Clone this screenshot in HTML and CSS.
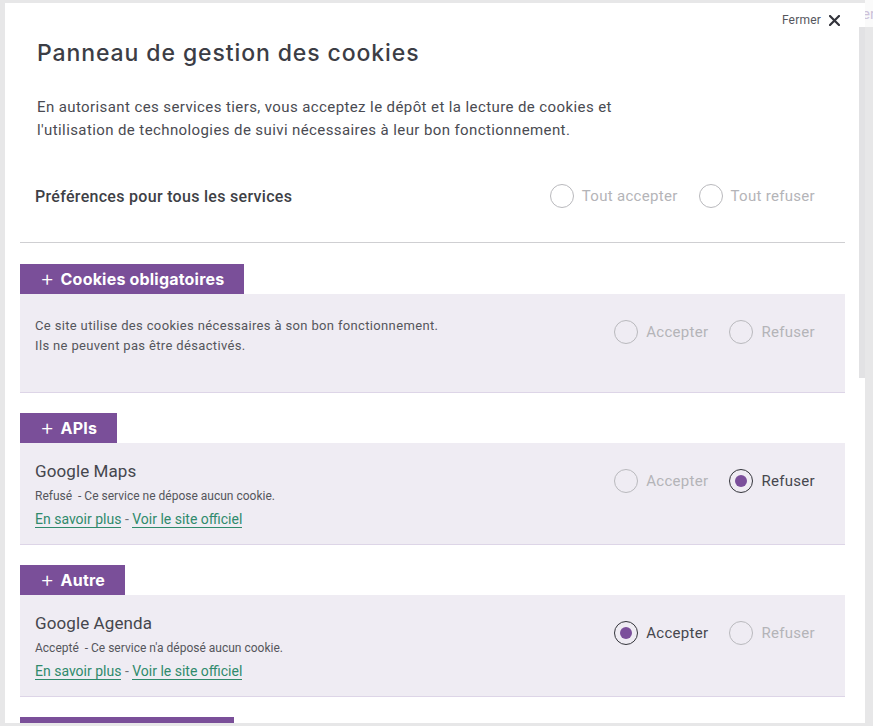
FILE: index.html
```html
<!DOCTYPE html>
<html lang="fr">
<head>
    <meta charset="utf-8">
    <title>Gestion des cookies</title>
    <link rel="stylesheet" href="styles.css">
</head>
<body>
    <div class="page-behind">
        <span class="behind-link">er</span>
    </div>

    <div class="modal">
        <div class="scroll-thumb"></div>
        <button class="close-btn">Fermer
            <svg width="11" height="11" viewBox="0 0 11 11"><path d="M1 1 L10 10 M10 1 L1 10" stroke="#33343c" stroke-width="2.2" stroke-linecap="round"/></svg>
        </button>

        <h1 class="modal-title">Panneau de gestion des cookies</h1>
        <p class="intro">En autorisant ces services tiers, vous acceptez le dépôt et la lecture de cookies et<br>l'utilisation de technologies de suivi nécessaires à leur bon fonctionnement.</p>

        <div class="all-row">
            <span class="all-label">Préférences pour tous les services</span>
            <div class="choices">
                <label class="choice"><span class="radio"></span>Tout accepter</label>
                <label class="choice"><span class="radio"></span>Tout refuser</label>
            </div>
        </div>

        <section class="group">
            <div class="group-tab"><span class="plus">+</span>Cookies obligatoires</div>
            <div class="service service-mandatory">
                <div class="service-info">
                    <p class="mandatory-text">Ce site utilise des cookies nécessaires à son bon fonctionnement.<br>Ils ne peuvent pas être désactivés.</p>
                </div>
                <div class="choices">
                    <label class="choice"><span class="radio"></span>Accepter</label>
                    <label class="choice"><span class="radio"></span>Refuser</label>
                </div>
            </div>
        </section>

        <section class="group">
            <div class="group-tab"><span class="plus">+</span>APIs</div>
            <div class="service">
                <div class="service-info">
                    <div class="service-name">Google Maps</div>
                    <div class="service-state">Refusé&nbsp; - Ce service ne dépose aucun cookie.</div>
                    <div class="service-links"><a href="#">En savoir plus</a> - <a href="#">Voir le site officiel</a></div>
                </div>
                <div class="choices">
                    <label class="choice"><span class="radio"></span>Accepter</label>
                    <label class="choice is-checked"><span class="radio"></span>Refuser</label>
                </div>
            </div>
        </section>

        <section class="group">
            <div class="group-tab"><span class="plus">+</span>Autre</div>
            <div class="service">
                <div class="service-info">
                    <div class="service-name">Google Agenda</div>
                    <div class="service-state">Accepté&nbsp; - Ce service n'a déposé aucun cookie.</div>
                    <div class="service-links"><a href="#">En savoir plus</a> - <a href="#">Voir le site officiel</a></div>
                </div>
                <div class="choices">
                    <label class="choice is-checked"><span class="radio"></span>Accepter</label>
                    <label class="choice"><span class="radio"></span>Refuser</label>
                </div>
            </div>
        </section>

        <section class="group">
            <div class="group-tab"><span class="plus">+</span>Mesure d'audience</div>
            <div class="service">
                <div class="service-info">
                    <div class="service-name">Google Analytics</div>
                    <div class="service-state">Refusé&nbsp; - Ce service ne dépose aucun cookie.</div>
                    <div class="service-links"><a href="#">En savoir plus</a> - <a href="#">Voir le site officiel</a></div>
                </div>
                <div class="choices">
                    <label class="choice"><span class="radio"></span>Accepter</label>
                    <label class="choice is-checked"><span class="radio"></span>Refuser</label>
                </div>
            </div>
        </section>
    </div>
</body>
</html>
```

FILE: styles.css
```css
html, body {
    margin: 0;
    height: 100%;
    overflow: hidden;
}
body {
    background: #e7e7e8;
    font-family: Roboto, "Liberation Sans", sans-serif;
    color: #4b4b52;
}

/* page sitting behind the panel */
.page-behind {
    position: absolute;
    top: 0;
    right: 0;
    width: 8px;
    height: 27px;
    background: #fafafa;
    overflow: hidden;
}
.behind-link {
    display: block;
    margin: 5px 0 0 -3px;
    font-size: 15px;
    color: #cdc2da;
}

.modal {
    position: absolute;
    top: 3px;
    left: 5px;
    width: 860px;
    height: 720px;
    box-sizing: border-box;
    padding: 0 20px 26px 15px;
    background: #fff;
    overflow: hidden;
}

/* panel scroll indicator, drawn over the right edge */
.scroll-thumb {
    position: absolute;
    top: 24px;
    right: 0;
    width: 6px;
    height: 351px;
    background: #e2e2e4;
}

.close-btn {
    position: absolute;
    top: 10px;
    right: 25px;
    display: flex;
    align-items: center;
    gap: 8px;
    padding: 0;
    border: none;
    background: none;
    font-family: Roboto, "Liberation Sans", sans-serif;
    font-size: 12px;
    letter-spacing: 0.2px;
    color: #55565d;
    cursor: pointer;
}

.modal-title {
    margin: 35px 0 0 17px;
    font-family: Inter, "Open Sans", sans-serif;
    font-size: 23px;
    font-weight: 500;
    line-height: 30px;
    color: #3c3d45;
    letter-spacing: 0.9px;
}
.intro {
    margin: 28px 0 0 17px;
    font-size: 15px;
    line-height: 23px;
    letter-spacing: 0.4px;
    color: #4a4b52;
}

.all-row {
    display: flex;
    align-items: center;
    justify-content: space-between;
    margin-top: 42px;
    padding: 0 30px 34px 15px;
    border-bottom: 1px solid #cfcfd2;
}
.all-label {
    font-size: 16px;
    font-weight: 500;
    letter-spacing: 0.3px;
    color: #3e3f46;
}

.choices {
    display: flex;
    gap: 21px;
}
.choice {
    display: flex;
    align-items: center;
    gap: 8px;
    font-size: 15px;
    line-height: 24px;
    letter-spacing: 0.3px;
    color: #b4b4b8;
}
.radio {
    width: 22px;
    height: 22px;
    border: 1px solid #b9b9bd;
    border-radius: 50%;
    box-sizing: content-box;
    display: flex;
    align-items: center;
    justify-content: center;
}
.is-checked {
    color: #46474e;
}
.is-checked .radio {
    border-color: #34353b;
}
.is-checked .radio::after {
    content: "";
    width: 12px;
    height: 12px;
    border-radius: 50%;
    background: #7b4f9b;
}

.group {
    margin-top: 20px;
}
.all-row + .group {
    margin-top: 21px;
}
.group-tab {
    display: inline-flex;
    align-items: center;
    height: 30px;
    padding: 0 20px 0 20px;
    background: #7a4f99;
    color: #fff;
    font-family: Inter, "Open Sans", sans-serif;
    font-size: 16px;
    font-weight: 700;
    letter-spacing: 0.2px;
}
.plus {
    margin-right: 6px;
    font-size: 22px;
    font-weight: 300;
    line-height: 1;
    position: relative;
    top: -1px;
}

.service {
    display: flex;
    justify-content: space-between;
    align-items: flex-start;
    padding: 16px 30px 15px 15px;
    background: #efecf3;
    border-bottom: 1px solid #ddd5e7;
}
.service-mandatory {
    padding-bottom: 36px;
}
.service .choices {
    margin-top: 10px;
}
.mandatory-text {
    margin: 6px 0 0;
    font-size: 13px;
    line-height: 20px;
    letter-spacing: 0.35px;
    color: #55565c;
}
.service-name {
    font-size: 17px;
    line-height: 24px;
    letter-spacing: 0.1px;
    color: #45464d;
}
.service-state {
    margin-top: 4px;
    font-size: 12px;
    line-height: 18px;
    color: #55565c;
}
.service-links {
    margin-top: 4px;
    font-size: 14px;
    line-height: 20px;
    color: #6f7076;
}
.service-links a {
    color: #2f8a6c;
    text-decoration: none;
    border-bottom: 1px solid #2f8a6c;
}
```
